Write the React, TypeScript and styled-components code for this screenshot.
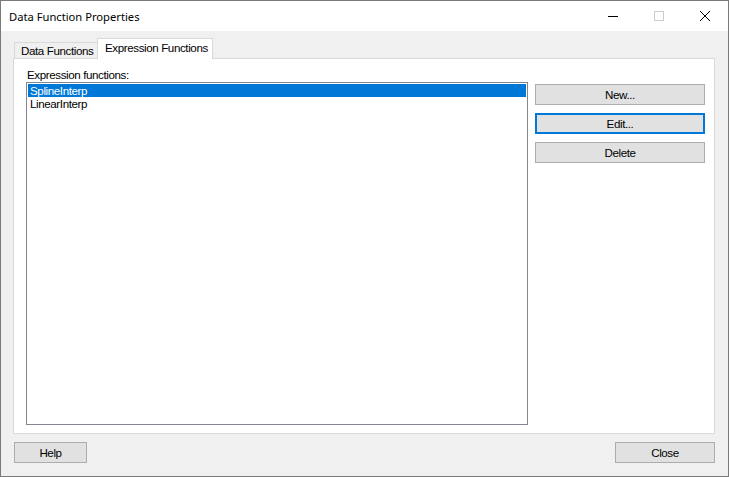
import React from "react";
import styled, { createGlobalStyle } from "styled-components";

const GlobalStyle = createGlobalStyle`
  html, body {
    margin: 0;
    padding: 0;
    background: #ffffff;
  }
  * {
    box-sizing: border-box;
  }
`;

const Window = styled.div`
  width: 729px;
  height: 477px;
  border: 1px solid #7a7a7a;
  display: flex;
  flex-direction: column;
  background: #f0f0f0;
  font-family: "Liberation Sans", Arial, sans-serif;
  font-size: 11.6px;
  letter-spacing: -0.4px;
  color: #000;
`;

const TitleBar = styled.div`
  height: 30px;
  background: #ffffff;
  display: flex;
  align-items: center;
  flex-shrink: 0;
`;

const Title = styled.div`
  flex: 1;
  padding-left: 8px;
  font-family: "Noto Sans", "Open Sans", sans-serif;
  font-size: 11.2px;
  letter-spacing: 0;
  color: #000;
`;

const CaptionButton = styled.div<{ $disabled?: boolean }>`
  width: 46px;
  height: 30px;
  display: flex;
  align-items: center;
  justify-content: center;
  color: ${(p) => (p.$disabled ? "#cccccc" : "#000")};
`;

const Client = styled.div`
  flex: 1;
  display: flex;
  flex-direction: column;
  padding: 7px 13px 12px 12px;
`;

const TabStrip = styled.div`
  display: flex;
  align-items: flex-end;
  height: 20px;
  padding-left: 1px;
`;

const Tab = styled.div<{ $active?: boolean }>`
  position: relative;
  z-index: ${(p) => (p.$active ? 1 : 0)};
  height: ${(p) => (p.$active ? "21px" : "16px")};
  margin-bottom: ${(p) => (p.$active ? "-1px" : "0")};
  margin-left: ${(p) => (p.$active ? "-1px" : "0")};
  width: ${(p) => (p.$active ? "116px" : "84px")};
  border: 1px solid #d9d9d9;
  border-bottom: none;
  background: ${(p) => (p.$active ? "#ffffff" : "#f0f0f0")};
  padding: ${(p) => (p.$active ? "2px 0 0 7px" : "1px 0 0 6px")};
  line-height: 13px;
  white-space: nowrap;
`;

const Panel = styled.div`
  height: 376px;
  background: #ffffff;
  border: 1px solid #d9d9d9;
  display: flex;
  gap: 7px;
  padding: 9px 8px 8px 12px;
`;

const LeftColumn = styled.div`
  width: 502px;
  display: flex;
  flex-direction: column;
`;

const Label = styled.div`
  line-height: 13px;
  height: 13px;
  margin-bottom: 1px;
  padding-left: 1px;
`;

const ListBox = styled.div`
  flex: 1;
  border: 1px solid #828790;
  background: #ffffff;
  padding: 1px;
`;

const ListItem = styled.div<{ $selected?: boolean }>`
  height: 13px;
  line-height: 14px;
  padding-left: 2px;
  background: ${(p) => (p.$selected ? "#0078d7" : "transparent")};
  color: ${(p) => (p.$selected ? "#ffffff" : "#000")};
`;

const ButtonColumn = styled.div`
  display: flex;
  flex-direction: column;
  gap: 8px;
  margin-top: 16px;
`;

const Button = styled.div<{ $focused?: boolean; $width?: number }>`
  width: ${(p) => p.$width ?? 170}px;
  height: 21px;
  background: #e1e1e1;
  border: ${(p) => (p.$focused ? "2px solid #0078d7" : "1px solid #adadad")};
  display: flex;
  align-items: center;
  justify-content: center;
  line-height: 13px;
`;

const Footer = styled.div`
  display: flex;
  justify-content: space-between;
  margin-top: 8px;
  padding-left: 1px;
`;

export default function App() {
  return (
    <>
      <GlobalStyle />
      <Window>
        <TitleBar>
          <Title>Data Function Properties</Title>
          <CaptionButton>
            <svg width="10" height="10" viewBox="0 0 10 10">
              <path d="M0 5.5h10" stroke="currentColor" strokeWidth="1" />
            </svg>
          </CaptionButton>
          <CaptionButton $disabled>
            <svg width="10" height="10" viewBox="0 0 10 10">
              <rect x="0.5" y="0.5" width="9" height="9" fill="none" stroke="currentColor" />
            </svg>
          </CaptionButton>
          <CaptionButton>
            <svg width="10" height="10" viewBox="0 0 10 10">
              <path d="M0 0L10 10M10 0L0 10" stroke="currentColor" strokeWidth="1" />
            </svg>
          </CaptionButton>
        </TitleBar>
        <Client>
          <TabStrip>
            <Tab>Data Functions</Tab>
            <Tab $active>Expression Functions</Tab>
          </TabStrip>
          <Panel>
            <LeftColumn>
              <Label>Expression functions:</Label>
              <ListBox>
                <ListItem $selected>SplineInterp</ListItem>
                <ListItem>LinearInterp</ListItem>
              </ListBox>
            </LeftColumn>
            <ButtonColumn>
              <Button>New...</Button>
              <Button $focused>Edit...</Button>
              <Button>Delete</Button>
            </ButtonColumn>
          </Panel>
          <Footer>
            <Button $width={73}>Help</Button>
            <Button $width={100}>Close</Button>
          </Footer>
        </Client>
      </Window>
    </>
  );
}
